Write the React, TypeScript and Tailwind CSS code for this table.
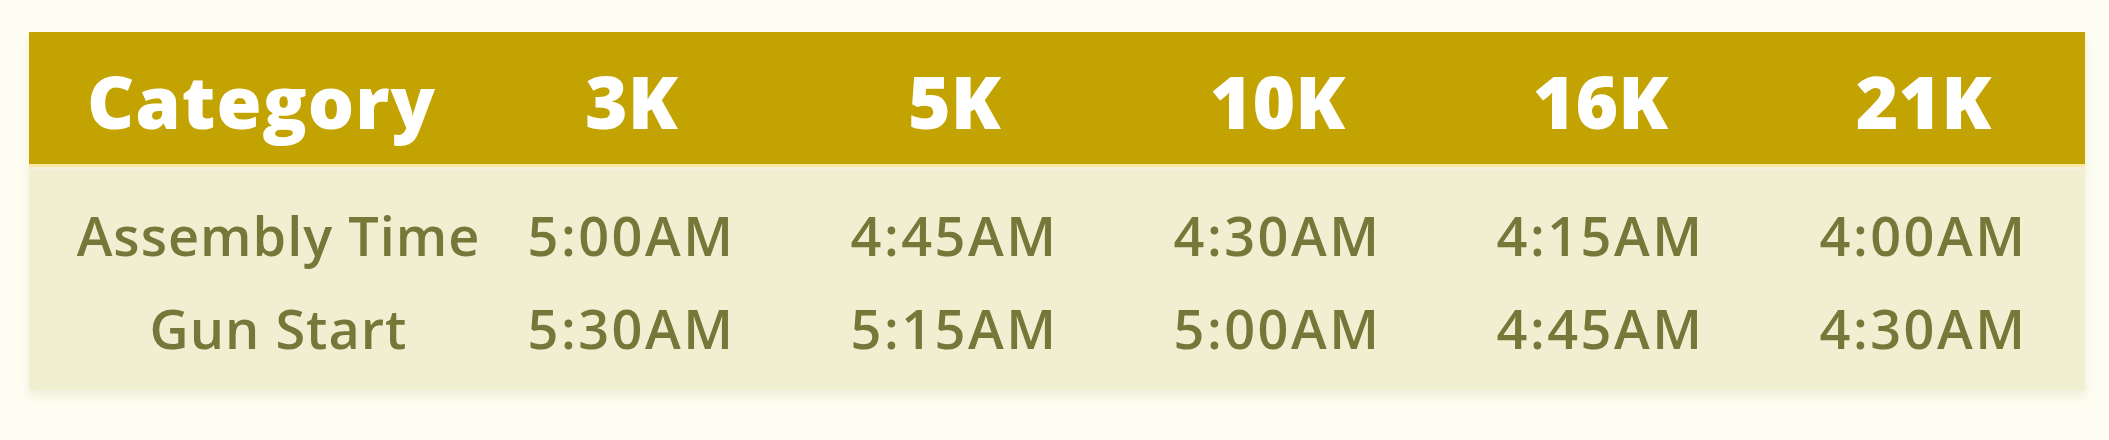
const distances = ['3K', '5K', '10K', '16K', '21K']

const rows = [
  { label: 'Assembly Time', times: ['5:00AM', '4:45AM', '4:30AM', '4:15AM', '4:00AM'] },
  { label: 'Gun Start', times: ['5:30AM', '5:15AM', '5:00AM', '4:45AM', '4:30AM'] },
]

export default function App() {
  return (
    <div
      className="min-h-[440px] bg-[#fdfdf1] pt-[32px] pl-[29px]"
      style={{ fontFamily: '"Open Sans", "Liberation Sans", sans-serif' }}
    >
      <div className="w-[2056px] shadow-[0_6px_8px_rgba(200,200,160,0.25)]">
        {/* header */}
        <div className="grid h-[132px] grid-cols-[401px_repeat(5,1fr)] items-center bg-[#c3a302] pl-[40px] pt-[4px]">
          <div className="pr-[16px] text-center text-[73px] font-extrabold leading-none tracking-[1px] text-white">
            Category
          </div>
          {distances.map((d) => (
            <div key={d} className="text-center text-[73px] font-extrabold leading-none text-white">
              {d}
            </div>
          ))}
        </div>
        <div className="h-[3px] bg-[#fae9a2]" />
        <div className="h-[3px] bg-[#f6efdc]" />

        {/* body */}
        <div className="bg-[#f0efd1] pt-[18px] pb-[16px] pl-[40px]">
          {rows.map((row) => (
            <div key={row.label} className="grid h-[93px] grid-cols-[401px_repeat(5,1fr)] items-center">
              <div className="flex min-w-0 justify-center pl-[18px]">
                <span className="whitespace-nowrap text-[54px] font-semibold leading-none tracking-[1px] text-[#76783a]">
                  {row.label}
                </span>
              </div>
              {row.times.map((t, i) => (
                <div key={i} className="text-center whitespace-nowrap text-[54px] font-semibold leading-none tracking-[2.5px] text-[#76783a]">
                  {t}
                </div>
              ))}
            </div>
          ))}
        </div>
      </div>
    </div>
  )
}
